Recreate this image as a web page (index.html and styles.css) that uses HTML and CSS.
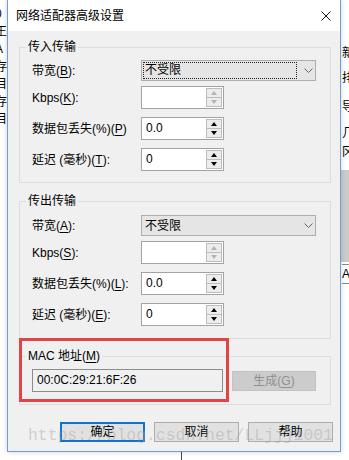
FILE: index.html
```html
<!doctype html>
<html>
<head>
<meta charset="UTF-8">
<title>网络适配器高级设置</title>
<link rel="stylesheet" href="styles.css">
</head>
<body>
<div class="desk">

<!-- windows behind the dialog -->
<div class="behind behind-left">
  <div>0</div><div>王</div><div>A</div><div>存</div><div>目</div><div>存</div><div>目</div>
</div>
<div class="behind behind-right">
  <div class="r-ch r1">新</div>
  <div class="r-ch r2">排</div>
  <div class="r-ch r3">导</div>
  <div class="r-ch r4">几</div>
  <div class="r-ch r5">冈</div>
  <div class="r-band"></div>
  <div class="r-ch r-box">A</div>
</div>
<div class="bottom-line"></div>

<div class="dialog">
  <div class="titlebar">
    <span class="title">网络适配器高级设置</span>
    <svg class="close" width="10" height="10" viewBox="0 0 10 10"><path d="M0.5 0.5L9.5 9.5M9.5 0.5L0.5 9.5" stroke="#111" stroke-width="1" fill="none"/></svg>
  </div>

  <div class="body">
    <fieldset class="group">
      <legend>传入传输</legend>
      <div class="row row-combo">
        <label>带宽(<u>B</u>):</label>
        <div class="combo">
          <span class="focus">不受限</span>
          <svg class="chev" width="9" height="5" viewBox="0 0 9 5"><path d="M0.5 0.5L4.5 4.5L8.5 0.5" stroke="#666" fill="none"/></svg>
        </div>
      </div>
      <div class="row">
        <label>Kbps(<u>K</u>):</label>
        <div class="spin">
          <span class="val"></span>
          <div class="arrows off"><span class="up"></span><span class="dn"></span></div>
        </div>
      </div>
      <div class="row">
        <label>数据包丢失(%)(<u>P</u>)</label>
        <div class="spin">
          <span class="val">0.0</span>
          <div class="arrows"><span class="up"></span><span class="dn"></span></div>
        </div>
      </div>
      <div class="row">
        <label>延迟 (毫秒)(<u>T</u>):</label>
        <div class="spin">
          <span class="val">0</span>
          <div class="arrows"><span class="up"></span><span class="dn"></span></div>
        </div>
      </div>
    </fieldset>

    <fieldset class="group group-out">
      <legend>传出传输</legend>
      <div class="row row-combo">
        <label>带宽(<u>A</u>):</label>
        <div class="combo">
          <span class="plain">不受限</span>
          <svg class="chev" width="9" height="5" viewBox="0 0 9 5"><path d="M0.5 0.5L4.5 4.5L8.5 0.5" stroke="#666" fill="none"/></svg>
        </div>
      </div>
      <div class="row">
        <label>Kbps(<u>S</u>):</label>
        <div class="spin">
          <span class="val"></span>
          <div class="arrows off"><span class="up"></span><span class="dn"></span></div>
        </div>
      </div>
      <div class="row">
        <label>数据包丢失(%)(<u>L</u>):</label>
        <div class="spin">
          <span class="val">0.0</span>
          <div class="arrows"><span class="up"></span><span class="dn"></span></div>
        </div>
      </div>
      <div class="row">
        <label>延迟 (毫秒)(<u>E</u>):</label>
        <div class="spin">
          <span class="val">0</span>
          <div class="arrows"><span class="up"></span><span class="dn"></span></div>
        </div>
      </div>
    </fieldset>

    <fieldset class="group group-mac">
      <legend>MAC 地址(<u>M</u>)</legend>
      <div class="row">
        <div class="mac-box">00:0C:29:21:6F:26</div>
        <button class="btn btn-off">生成(<u>G</u>)</button>
      </div>
    </fieldset>

    <div class="buttons">
      <button class="btn btn-default">确定</button>
      <button class="btn">取消</button>
      <button class="btn">帮助</button>
    </div>
  </div>

  <div class="mark"></div>
</div>

<div class="watermark">https://blog.csdn.net/LLjjj1001</div>
</div>
</body>
</html>
```

FILE: styles.css
```css
*{box-sizing:border-box;}
body{margin:0;font:12px/16px "Liberation Sans","Noto Sans CJK SC",sans-serif;color:#000;}
u{text-decoration:underline;text-underline-offset:2px;}

.desk{position:relative;width:349px;height:460px;overflow:hidden;background:#fff;}

/* background windows */
.behind{position:absolute;top:0;}
.behind-left{left:-5px;top:6px;width:14px;line-height:17.5px;}
.behind-right{left:341px;width:8px;height:460px;}
.r-ch{position:absolute;left:1px;line-height:16px;}
.r1{top:45px;}
.r2{top:70px;}
.r3{top:99px;}
.r4{top:125px;}
.r5{top:144px;}
.r-band{position:absolute;left:0;top:170px;width:8px;height:92px;background:#cbcbcb;}
.r-box{top:264px;height:20px;line-height:18px;border-top:1px solid #888;border-bottom:1px solid #888;}
.bottom-line{position:absolute;left:181px;top:452px;width:1px;height:8px;background:#444;}

/* dialog */
.dialog{position:absolute;left:7px;top:0;width:334px;height:452px;border:1px solid #6d9fd3;border-top:0;background:#f0f0f0;display:flex;flex-direction:column;box-shadow:0 0 5px rgba(0,0,0,.18);}
.titlebar{height:31px;flex:none;background:#fff;display:flex;align-items:center;justify-content:space-between;padding:0 9px 0 8px;}
.title{line-height:16px;}
.close{display:block;}
.body{flex:1;padding:0 9px 0 11px;}

.group{margin:8px 0 0;padding:5px 13px 11px 12px;border:1px solid #dcdcdc;min-width:0;}
.group legend{padding:0 2px;margin-left:-6px;line-height:16px;}
.group-out{margin-top:10px;padding-top:6px;padding-bottom:12px;}
.group-mac{margin-top:9px;padding-bottom:12px;}

.row{display:flex;align-items:center;height:23px;margin-top:8px;}
.row:first-of-type{margin-top:0;}
.row-combo{height:21px;}
.row-combo + .row{margin-top:5px;}
.row label{width:109px;flex:none;white-space:nowrap;}

.combo{width:175px;height:21px;border:1px solid #adadad;background:#e5e5e5;display:flex;align-items:center;}
.combo .focus{margin-left:1px;width:154px;height:17px;border:1px dotted #222;padding-left:1px;line-height:15px;}
.combo .plain{padding-left:3px;}
.combo .chev{margin-left:auto;margin-right:2px;display:block;}

.spin{width:83px;height:23px;border:1px solid #a3a3a3;background:#fff;display:flex;}
.spin .val{flex:1;padding-left:4px;line-height:21px;}
.arrows{width:16px;margin:1px 1px 1px 0;border:1px solid #bdbdbd;display:flex;flex-direction:column;}
.arrows span{flex:1;background:#ececec;display:flex;align-items:center;justify-content:center;}
.arrows .dn{border-top:1px solid #bdbdbd;}
.arrows .up::after{content:"";border-left:3.5px solid transparent;border-right:3.5px solid transparent;border-bottom:4px solid #000;}
.arrows .dn::after{content:"";border-left:3.5px solid transparent;border-right:3.5px solid transparent;border-top:4px solid #000;}
.arrows.off .up::after{border-bottom-color:#b4b4b4;}
.arrows.off .dn::after{border-top-color:#b4b4b4;}

.mac-box{width:191px;height:23px;border:1px solid #8c8c8c;background:#f0f0f0;padding-left:4px;line-height:21px;}

.btn{font:inherit;width:85px;height:20px;padding:0;border:1px solid #adadad;background:#e1e1e1;color:#000;line-height:16px;}
.btn-off{width:84px;margin-left:9px;background:#cccccc;border-color:#c2c2c2;color:#8f8f8f;}
.btn-default{border:2px solid #0f73cf;}
.buttons{display:flex;justify-content:flex-end;gap:9px;margin:17px -2px 0 0;}

/* red annotation */
.mark{position:absolute;left:11px;top:338px;width:210px;height:64px;border:3px solid #e04444;}

.watermark{position:absolute;left:28px;top:427px;font:16.4px/18px "Liberation Mono",monospace;color:rgba(165,165,165,.45);white-space:nowrap;}
```
